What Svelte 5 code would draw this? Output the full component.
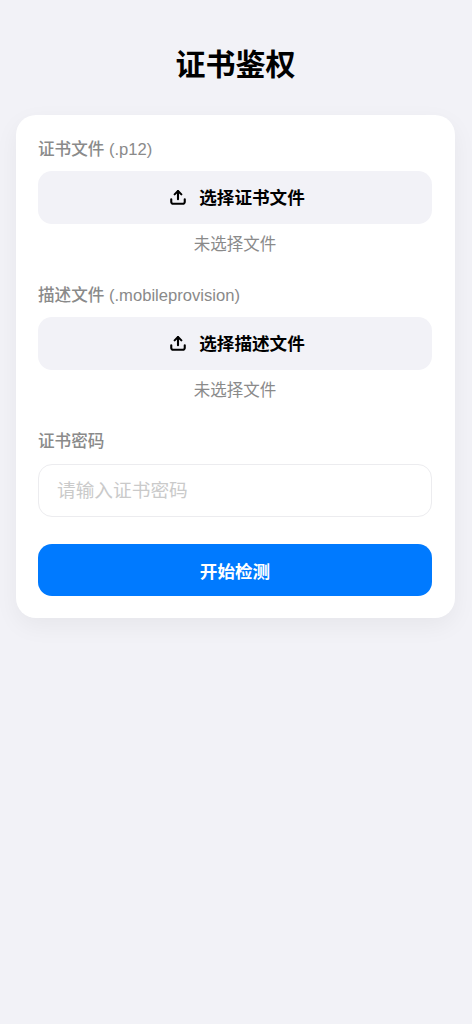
<script>
	const uploads = [
		{ label: '证书文件', ext: '(.p12)', button: '选择证书文件', accept: '.p12' },
		{ label: '描述文件', ext: '(.mobileprovision)', button: '选择描述文件', accept: '.mobileprovision' }
	];
</script>

<div class="page">
	<h1>证书鉴权</h1>

	<div class="card">
		{#each uploads as item}
			<div class="group">
				<div class="label">{item.label} {item.ext}</div>
				<label class="pick">
					<input type="file" accept={item.accept} />
					<svg width="18" height="18" viewBox="0 0 24 24" fill="none" stroke="#000" stroke-width="2.8" stroke-linecap="round" stroke-linejoin="round">
						<path d="M12 15V4" />
						<path d="M7.5 8.5 12 4l4.500 4.500" />
						<path d="M3 15v3.500A2.500 2.500 0 0 0 5.500 21h13a2.500 2.500 0 0 0 2.500-2.500V15" />
					</svg>
					<span>{item.button}</span>
				</label>
				<div class="file-name">未选择文件</div>
			</div>
		{/each}

		<div class="group">
			<div class="label password-label">证书密码</div>
			<input class="password" type="password" placeholder="请输入证书密码" />
		</div>

		<button class="submit">开始检测</button>
	</div>
</div>

<style>
	:global(body) {
		background: #f2f2f7;
	}

	.page {
		min-height: 1024px;
		box-sizing: border-box;
		padding: 20px 17px 20px 16px;
		font-family: "Liberation Sans", "Noto Sans CJK SC", sans-serif;
		background: #f2f2f7;
	}

	h1 {
		margin: 27px 0 32px;
		font-size: 30px;
		line-height: 36px;
		font-weight: 700;
		text-align: center;
		color: #000;
	}

	.card {
		background: #fff;
		border-radius: 20px;
		padding: 22px 23px 22px 22px;
		box-shadow: 0 8px 24px rgba(0, 0, 0, 0.05);
	}

	.group {
		margin-bottom: 27px;
	}

	.label {
		font-size: 16.6px;
		line-height: 26px;
		font-weight: 500;
		color: #8a8a8a;
		margin-bottom: 8px;
	}

	.password-label {
		margin-bottom: 9px;
	}

	.pick {
		display: flex;
		align-items: center;
		justify-content: center;
		gap: 12px;
		height: 53px;
		padding: 0 0 2px 4px;
		box-sizing: border-box;
		border-radius: 14px;
		background: #f2f2f7;
		font-size: 17.6px;
		font-weight: 600;
		color: #000;
	}

	.pick input {
		display: none;
	}

	.file-name {
		margin-top: 8px;
		font-size: 16.5px;
		line-height: 24px;
		text-align: center;
		color: #8a8a8a;
	}

	.password {
		display: block;
		width: 100%;
		height: 53px;
		box-sizing: border-box;
		padding: 0 18px;
		border: 1px solid #ececef;
		border-radius: 14px;
		font-family: inherit;
		font-size: 18.7px;
		outline: none;
	}

	.password::placeholder {
		color: #cacaca;
	}

	.submit {
		display: block;
		width: 100%;
		height: 52px;
		border: none;
		border-radius: 14px;
		background: #007aff;
		color: #fff;
		font-family: inherit;
		font-size: 17.6px;
		font-weight: 700;
	}
</style>
